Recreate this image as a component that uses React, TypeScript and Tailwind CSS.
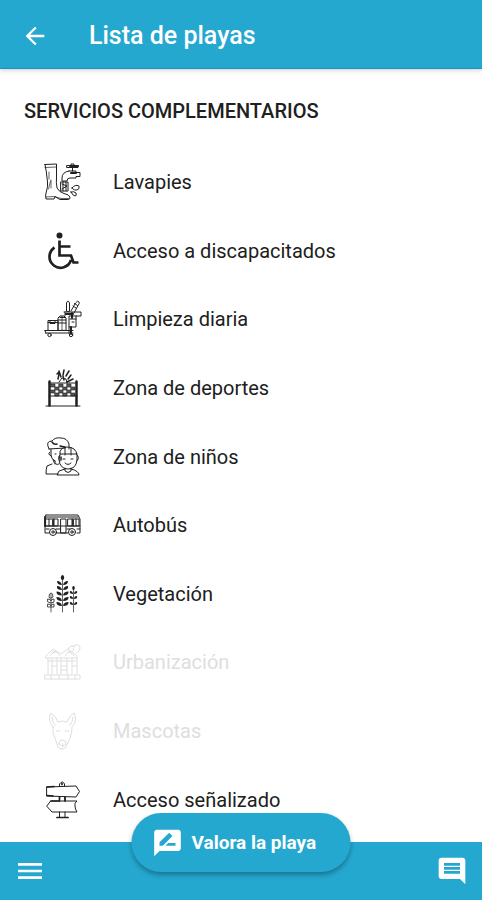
import type { ReactNode } from "react";
import { MdArrowBack, MdComment, MdMenu, MdRateReview } from "react-icons/md";

function Glyph({ children }: { children: ReactNode }) {
  return (
    <svg
      viewBox="0 0 40 40"
      className="size-10 shrink-0"
      fill="none"
      stroke="currentColor"
      strokeWidth="1"
      strokeLinecap="round"
      strokeLinejoin="round"
      aria-hidden="true"
    >
      {children}
    </svg>
  );
}

const FootWash = () => (
  <Glyph>
    <path d="M2 2.500 13.500 2V15q-.5 6 .5 11 2 4 7 5.500 5 1 6 3.500.5 2-1.500 2.500H17l-5-3-1 2.500H3q-1-4 .5-8 1.500-4 1-9Q3.500 9 2 2.500Z" />
    <path d="M2 5.500 13 5M6 10v7M8 18v8M5.500 27l2-8M3 35l8-.5 7 2h8" strokeWidth=".7" />
    <path d="M24 3.500h4v-1.500h3v1.500h4v2H24ZM29.500 5.500V9M26 9h7v1.500h4v4h-4V16h-6q-3 0-3 3h-5v-3q0-6 7-7" />
    <path d="M18 20h7v9h-7ZM20 20v9M23 20v9M19 22l5 2-5 3" />
    <path d="M29 26q3-4 7-2 1 3-2 4-3 1-5-2ZM28 30q3-1 5 1 1 3-1 3t-4-4Z" />
    <path d="M27 4h8M28 11h5" strokeWidth="2" />
  </Glyph>
);

const Wheelchair = () => (
  <Glyph>
    <circle cx="16.500" cy="4.500" r="3" fill="currentColor" stroke="none" />
    <path
      d="M16.500 9.500v15h11.500l2.500 7h5M16.500 15.500h11M11.500 16.500a11 11 0 1 0 16.500 12.500"
      strokeWidth="2.700"
      strokeLinecap="butt"
      strokeLinejoin="miter"
    />
  </Glyph>
);

const Cleaning = () => (
  <Glyph>
    <path d="M2 31.500h28M3 34h27M2 31.500l1 3" />
    <path d="M5 31V21.500h10V31M5 23.500h10M7 21.500v3h5v-3M15 31V19l2-2h4l2 2v12ZM15 21h8M15 24h8M17 18.500h5" />
    <path d="M19 17v14" strokeWidth=".7" />
    <path d="M23.500 12v-8q1.500-4 3 0v8ZM28 12l4.500-8q2-3 3.500-1 1 1-1 3.500L31 14M30 7l3 2M31.500 4.500l3 2" />
    <path d="M21 13h17v4H26v11h7V17M22 13v4M27 20h6M29 23h2M26 28v6" />
    <path d="M23 15h7M29 14v5" strokeWidth="2" />
    <circle cx="6.500" cy="36" r="1.700" />
    <circle cx="28" cy="36" r="1.700" />
    <path d="M28 28v7" strokeWidth="2" />
  </Glyph>
);

const BeachSports = () => (
  <Glyph>
    <path d="M6.500 13.500v24M33.500 13.500v24" strokeWidth="2.500" />
    <path d="M6 15h28M6 28h28M3 38h34" />
    <path
      d="M8 16h4v3H8zM16 16h4v3h-4zM24 16h4v3h-4zM12 19h4v3h-4zM20 19h4v3h-4zM28 19h4v3h-4zM8 22h4v3H8zM16 22h4v3h-4zM24 22h4v3h-4zM12 25h4v3h-4zM20 25h4v3h-4zM28 25h4v3h-4z"
      fill="currentColor"
      fillOpacity=".75"
      strokeWidth=".6"
    />
    <path d="m15 11 1-5M18 9l-2-6M20 7l1-5M23 8l3-5M25 11l3-4M21 12l-1-4M24 14l6-3M14 6l2-2" strokeWidth="1.500" />
    <path d="m16 14 3-4 4 1 1 4" />
  </Glyph>
);

const Children = () => (
  <Glyph>
    <path d="M6 12Q2 4 9 4q3-4 9-3 6 0 8 6v5M6 12l16-1M8 12v6q0 4 4 6M7 15q-3 2 1 4M12 17h1M12 24v3M9 27l-5 2q-1 3-1 8h12" />
    <path d="M17 17q-1-6 7-7 9 0 10 8v5q-1 9-9 9t-9-9ZM17 17h17M22 11v7M28 11v7M17 18q-3 2 0 6M34 18q3 2 0 6" />
    <path d="M20 22h2M28 22h2M22 26q3 3 6 0" />
    <path d="M22 31v3q3 3 6 0v-3M22 32l-6 2-2 4h22q0-4-8-6M10 23q2 6 6 4" />
    <path d="M9 5q2 3 5 2M17 9l5 1M18 20v3" strokeWidth="1.500" />
  </Glyph>
);

const Bus = () => (
  <Glyph>
    <path d="M3 10h32l2 4v14h-3M6 28H2V12l1-2M13 28h12M3 12h32M2 21h35" />
    <path d="M3 14h12v7H3ZM6 14v7M11 14v7M18 14h5v14h-5ZM25 14h11v7H25ZM29 14v7M33 14v7" />
    <path d="M2 12v9M10 15v5M30 15v5" strokeWidth="1.800" />
    <path d="M3 24h3M13 24h4M24 24h3M34 24h3" />
    <circle cx="10" cy="27" r="3.500" />
    <circle cx="10" cy="27" r="1.200" />
    <circle cx="29" cy="27" r="3.500" />
    <circle cx="29" cy="27" r="1.200" />
  </Glyph>
);

const Plants = () => (
  <Glyph>
    <path d="M19.500 4v34M8 20v18M30.500 14v24" strokeWidth=".7" />
    <g fill="currentColor" stroke="none">
      <ellipse cx="19.500" cy="3.500" rx="1.700" ry="2.500" />
      <path d="M14 7q4 0 5 4-5 0-5-4ZM25 7q-4 0-5 4 5 0 5-4ZM14 12q4 0 5 4-6 0-5-4ZM25 12q-4 0-5 4 6 0 5-4ZM13.500 17.500q5 0 5.500 4-6 0-5.500-4ZM25.500 17.500q-5 0-5.500 4 6 0 5.500-4ZM13.500 23q5 0 5.500 4-6 0-5.500-4ZM25.500 23q-5 0-5.500 4 6 0 5.500-4ZM13.500 28q5 0 5.500 4-6 0-5.500-4ZM25.500 28q-5 0-5.500 4 6 0 5.500-4Z" />
      <ellipse cx="30.500" cy="14" rx="1.300" ry="2" />
      <path d="M27 17q3 0 3 3-4 0-3-3ZM34 17q-3 0-3 3 4 0 3-3ZM27 22q3 0 3 3-4 0-3-3ZM34 22q-3 0-3 3 4 0 3-3ZM27 28q3 0 3 3-4 0-3-3ZM34 28q-3 0-3 3 4 0 3-3Z" />
    </g>
    <path d="M6 23q0-4 2-4t2 4l-2 1ZM5 25q3 0 3 2 0-2 3-2v3l-3 1-3-1ZM5 30q3 0 3 2 0-2 3-2v3H5Z" strokeWidth=".8" />
  </Glyph>
);

const Houses = () => (
  <Glyph>
    <path d="m3 14 7-7 8 5 7-5 9 7v2H3ZM5 16v16M34 16v16M2 33h35v4H2ZM9 16v16M14 16v16M18 16v16M24 16v16M29 16v16" />
    <path d="M5 19h28M9 24h5M18 24h6M18 28h6M29 24h5M9 10h4M25 10h4M7 14l5-5 5 5M22 14l4-5 5 5M8 37v-4M16 37v-4M25 37v-4M32 37v-4" />
    <path d="M25 7q2-4 6-3 4-3 6 1 1 4-3 6M31 4l-1 5" />
  </Glyph>
);

const Dog = () => (
  <Glyph>
    <path d="M10 16Q4 9 8 2q5 3 7 9 4-2 9 0 2-6 7-9 4 7-2 14 0 6-2 11l-4 9q-4 4-8 0l-3-9q-3-5-2-11ZM9 6q0 5 3 8M30 6q0 5-3 8" />
    <path d="M13 20h4M22 20h4M16 33q0-4 3.500-4t3.500 4q-3 4-7 0ZM19.500 33v3" />
  </Glyph>
);

const Signpost = () => (
  <Glyph>
    <path d="M16.500 6V4q3-4 5 0v2M4 7l29-1 3.500 5.500L33 17 4 16ZM16.500 17v4M22 17v4M8 21h26q-3 2-2 5 0 3 2 6H9l-5-5.500ZM16.500 32v5M22 32v5M14 37.500h11" />
    <path d="M4 7l7-.5M4 15.500l6 .5M8 21h7M16.500 17v4M22 17v4M14 37.500h11M19 3.500v1" strokeWidth="1.700" />
  </Glyph>
);

const services = [
  { name: "Lavapies", Icon: FootWash, available: true },
  { name: "Acceso a discapacitados", Icon: Wheelchair, available: true },
  { name: "Limpieza diaria", Icon: Cleaning, available: true },
  { name: "Zona de deportes", Icon: BeachSports, available: true },
  { name: "Zona de niños", Icon: Children, available: true },
  { name: "Autobús", Icon: Bus, available: true },
  { name: "Vegetación", Icon: Plants, available: true },
  { name: "Urbanización", Icon: Houses, available: false },
  { name: "Mascotas", Icon: Dog, available: false },
  { name: "Acceso señalizado", Icon: Signpost, available: true },
];

export default function App() {
  return (
    <div className="flex min-h-screen flex-col bg-white font-[Roboto,sans-serif] text-[#202020]">
      <header className="flex h-[69px] shrink-0 items-center gap-10 border-b border-[#1695bd] bg-[#25a8d0] px-[21px] pt-1 text-white shadow-[0_2px_4px_rgba(0,0,0,0.15)]">
        <button type="button" aria-label="Volver" className="flex size-7 items-center justify-center">
          <MdArrowBack className="size-7" />
        </button>
        <h1 className="text-[25px] leading-8 font-medium">Lista de playas</h1>
      </header>

      <main className="flex flex-1 flex-col pb-2">
        <h2 className="px-6 pt-7 pb-6 text-xl leading-7 font-medium">SERVICIOS COMPLEMENTARIOS</h2>
        <ul className="-mt-px flex flex-1 flex-col">
          {services.map(({ name, Icon, available }) => (
            <li
              key={name}
              className={
                available
                  ? "flex min-h-12 flex-1 items-center gap-[30px] px-[43px]"
                  : "flex min-h-12 flex-1 items-center gap-[30px] px-[43px] text-[#dedede]"
              }
            >
              <Icon />
              <span className="text-xl">{name}</span>
            </li>
          ))}
        </ul>
      </main>

      <footer className="relative flex h-[58px] shrink-0 items-center justify-between bg-[#25a8d0] px-3.5 text-white">
        <button type="button" aria-label="Menú">
          <MdMenu className="size-8" />
        </button>
        <button
          type="button"
          className="absolute bottom-7 left-1/2 flex h-[59px] w-[219px] -translate-x-1/2 items-center gap-2 rounded-full bg-[#25a8d0] px-5 text-[19px] leading-7 font-bold shadow-[0_3px_5px_rgba(0,0,0,0.3)]"
        >
          <MdRateReview className="size-8" />
          Valora la playa
        </button>
        <button type="button" aria-label="Comentarios">
          <MdComment className="size-8" />
        </button>
      </footer>
    </div>
  );
}
